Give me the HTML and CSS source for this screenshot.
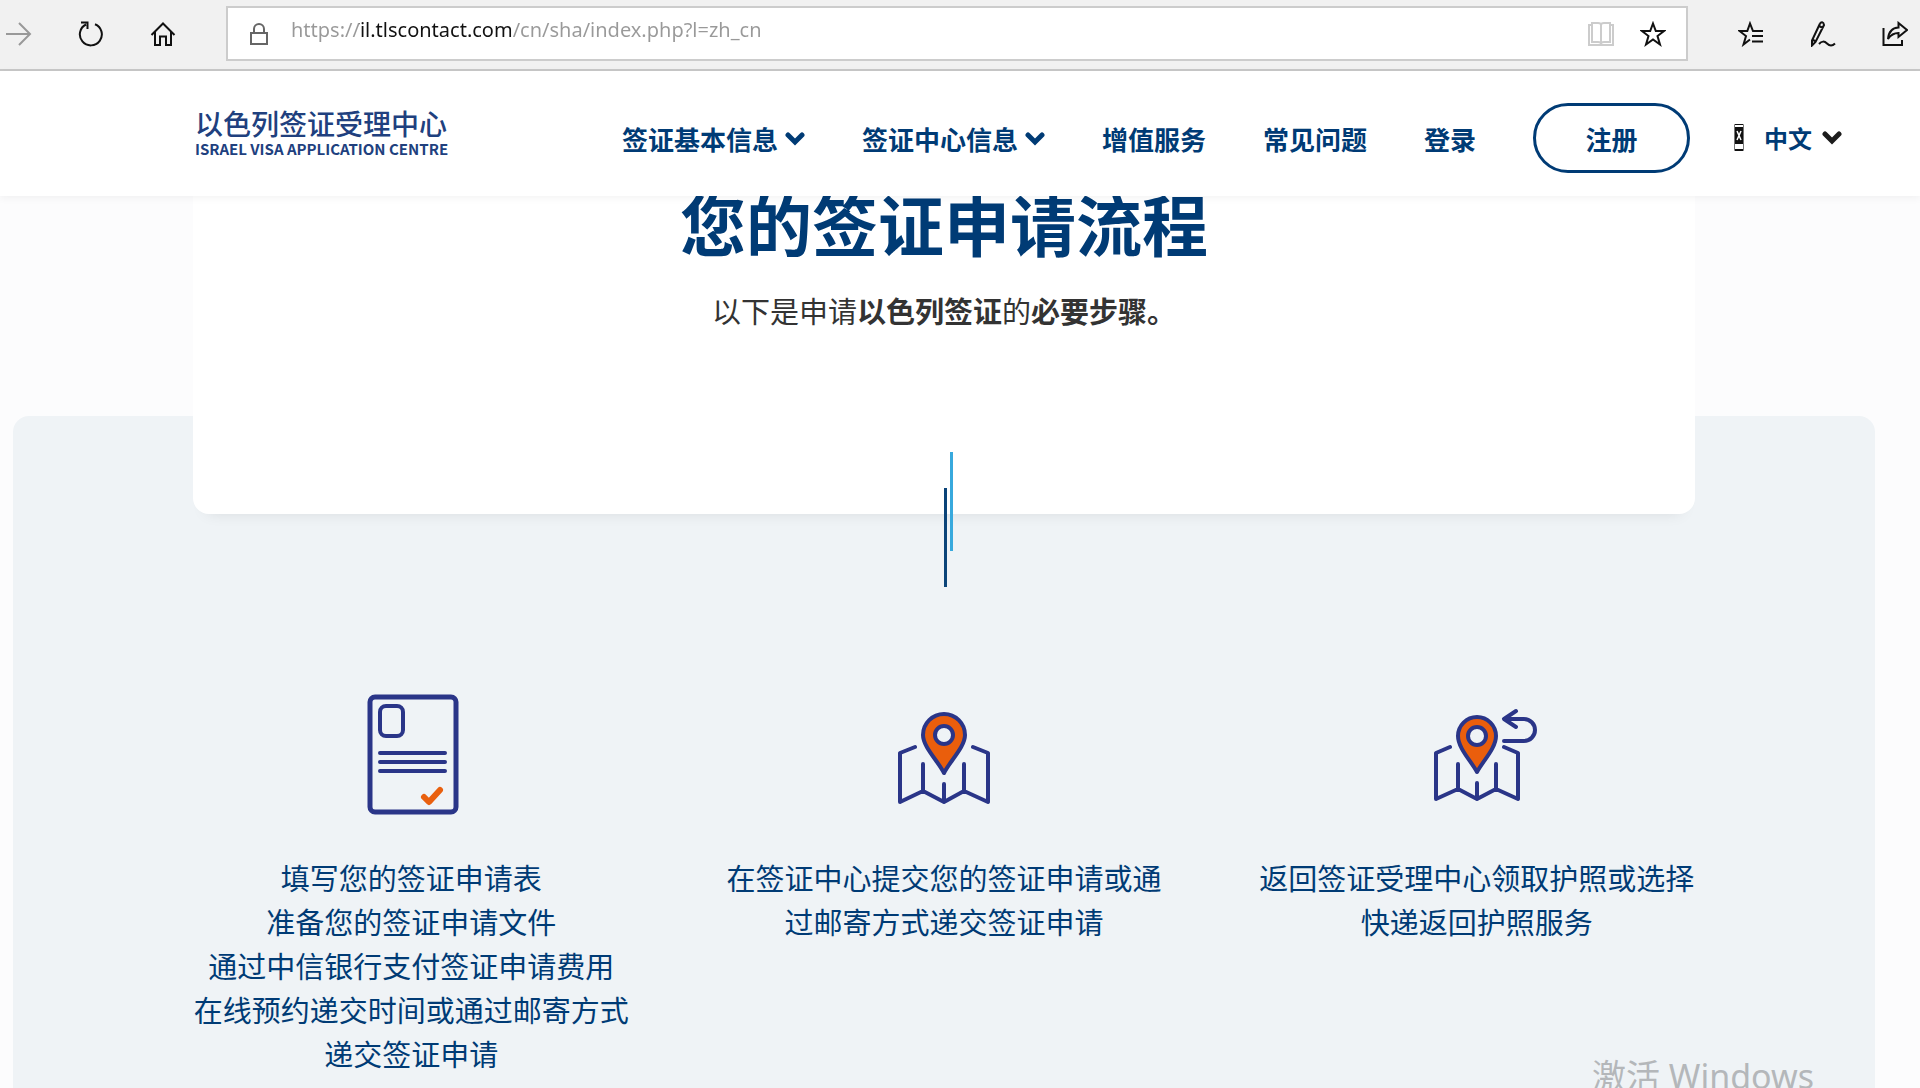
FILE: index.html
```html
<!DOCTYPE html>
<html lang="zh-CN">
<head>
<meta charset="utf-8">
<meta name="viewport" content="width=device-width, initial-scale=1">
<title>以色列签证受理中心</title>
<link rel="stylesheet" href="styles.css">
</head>
<body>
<div class="toolbar">
  <div class="tools tools-left">
    <button class="tool tool-dim" aria-label="前进"><svg viewBox="0 0 26 26"><path d="M0 13H24M13 2L24 13L13 24"/></svg></button>
    <button class="tool" aria-label="刷新"><svg viewBox="0 0 26 26"><path d="M17 3.200A11 11 0 1 1 8 3.500M3 1.500H9.500V8" stroke-width="2"/></svg></button>
    <button class="tool" aria-label="主页"><svg viewBox="0 0 26 26"><path d="M1.500 14L13 2.500L24.500 14M5 11V24H10V15.500H16V24H21V11" stroke-width="2"/></svg></button>
  </div>
  <div class="address">
    <svg class="lock" viewBox="0 0 18 22"><path d="M1 10H17V21H1ZM4 10V6A5 5 0 0 1 14 6V10"/></svg>
    <input class="url" type="text" aria-label="地址" value="https://il.tlscontact.com/cn/sha/index.php?l=zh_cn">
    <button class="tool tool-faint" aria-label="阅读视图"><svg viewBox="0 0 26 26"><path d="M4 2H10Q13 2 13 4Q13 2 16 2H22V21H16Q13 21 13 23Q13 21 10 21H4ZM13 4V23M4 4H1V24H25V4H22"/></svg></button>
    <button class="tool" aria-label="收藏"><svg viewBox="0 0 26 26"><path d="M13 2.500L15.800 10H24L17.500 15L20 23.500L13 18.500L6 23.500L8.500 15L2 10H10.200Z" stroke-width="2"/></svg></button>
  </div>
  <div class="tools tools-right">
    <button class="tool" aria-label="收藏夹"><svg viewBox="0 0 26 26"><path d="M25 10H15L12 2.500L9.300 10H1.500L8 15L5.500 23.500L12 18.500M14 15H25M14 20.500H25" stroke-width="2"/></svg></button>
    <button class="tool" aria-label="笔记"><svg viewBox="0 0 26 26"><path d="M10 2.500Q13 -.5 14 4L5.500 21L2 24.500V19.500L10 2.500M9 5L13 7M3 19L6 20.500M9 23Q13 18.500 17 22.500T25 22.500" stroke-width="2"/></svg></button>
    <button class="tool" aria-label="分享"><svg viewBox="0 0 26 26"><path d="M1.500 7V24H20V19M6 18Q7 7 16.500 6.500V2L25 9L16.500 16V12Q10 12 6 18Z" stroke-width="2"/></svg></button>
  </div>
</div>

<header class="header">
  <a class="logo" href="#"><span class="logo-cn">以色列签证受理中心</span><span class="logo-en">ISRAEL VISA APPLICATION CENTRE</span></a>
  <nav class="nav">
    <a href="#">签证基本信息<svg class="chevron" viewBox="0 0 20 14"><path d="M3 3L10 10L17 3"/></svg></a>
    <a href="#">签证中心信息<svg class="chevron" viewBox="0 0 20 14"><path d="M3 3L10 10L17 3"/></svg></a>
    <a href="#">增值服务</a>
    <a href="#">常见问题</a>
    <a href="#">登录</a>
    <button class="register">注册</button>
  </nav>
  <div class="language">
    <svg class="flag" viewBox="0 0 10 27"><path fill="#fff" stroke="#777" d="M.5.5H9.500V26.500H.5Z"/><path fill="#111" d="M1 3H9V20H1ZM1 25H9V27H1ZM1 0H9V1H1Z"/><path fill="none" stroke="#fff" stroke-width="1.500" d="M3 7L7 16M7 7L3 16"/></svg>
    <select class="language-select" aria-label="语言"><option>中文</option></select>
    <svg class="chevron chevron-dark" viewBox="0 0 20 14"><path d="M3 3L10 10L17 3"/></svg>
  </div>
</header>

<main class="main">
  <section class="intro">
    <h1>您的签证申请流程</h1>
    <p>以下是申请<strong>以色列签证</strong>的<strong>必要步骤。</strong></p>
    <span class="line line-light"></span>
    <span class="line line-dark"></span>
  </section>
  <section class="steps">
    <article class="step">
      <svg class="step-icon" viewBox="0 0 120 124"><g fill="none" stroke="#2a3588" stroke-linecap="round" stroke-linejoin="round"><rect x="19" y="4" width="86" height="115" rx="5" stroke-width="5"/><rect x="29" y="13" width="23" height="30" rx="6" stroke-width="4"/><path stroke-width="4" d="M29 60H94M29 69H94M29 78H94"/><path stroke="#e9600f" stroke-width="6" d="M73 104L78 109L89 97"/></g></svg>
      <p>填写您的签证申请表<br>准备您的签证申请文件<br>通过中信银行支付签证申请费用<br>在线预约递交时间或通过邮寄方式递交签证申请</p>
    </article>
    <article class="step">
      <svg class="step-icon" viewBox="0 0 120 124"><g fill="none" stroke="#2a3588" stroke-width="4" stroke-linecap="round" stroke-linejoin="round"><path d="M31 54L16 60V109L39 98L60 109L80 98L104 109V60L89 54M39 71V98M80 71V98M60 91V109"/><path fill="#ea5e0c" d="M60 80C54 68 39 54 39 42A21 21 0 0 1 81 42C81 54 66 68 60 80Z"/><circle cx="60" cy="42" r="9" fill="#eff3f6"/></g></svg>
      <p>在签证中心提交您的签证申请或通过邮寄方式递交签证申请</p>
    </article>
    <article class="step">
      <svg class="step-icon" viewBox="0 0 120 124"><g fill="none" stroke="#2a3588" stroke-width="4" stroke-linecap="round" stroke-linejoin="round"><path d="M33 54L19 60V106L41 96L60 106L79 96L101 106V60L87 54M41 71V96M79 71V96M60 90V106"/><path fill="#ea5e0c" d="M60 79C54 68 41 55 41 43A19 19 0 0 1 79 43C79 55 66 68 60 79Z"/><circle cx="60" cy="43" r="9" fill="#eff3f6"/><path d="M87 48H107A11 11 0 0 0 107 26H87M99 18L87 26L99 34"/></g></svg>
      <p>返回签证受理中心领取护照或选择快递返回护照服务</p>
    </article>
  </section>
</main>
<div class="watermark">激活 Windows</div>
</body>
</html>
```
FILE: styles.css
```css
* { box-sizing: border-box; }

body {
  margin: 0;
  min-height: 100vh;
  display: flex;
  flex-direction: column;
  position: relative;
  overflow-x: hidden;
  background: #fcfcfd;
  color: #333;
  font-family: "Noto Sans CJK SC", sans-serif;
}

a { color: inherit; text-decoration: none; }

button, input, select {
  margin: 0;
  padding: 0;
  border: 0;
  background: none;
  font: inherit;
  color: inherit;
}

/* Browser toolbar */
.toolbar {
  display: flex;
  align-items: center;
  padding: 6px 12px 8px 6px;
  border-bottom: 2px solid #c8c8c8;
  background: #f1f1f1;
}

.tools { display: flex; gap: 46px; }
.tools-left { margin-right: 50px; }
.tools-right { margin-left: 50px; }

.tool { width: 26px; height: 26px; color: #111; flex: none; }
.tool svg { display: block; width: 26px; height: 26px; }
.tool path, .lock path { fill: none; stroke: currentColor; stroke-width: 2; }
.tool-dim { color: #999; }
.tool-faint { color: #ccc; }

.address {
  flex: 1;
  display: flex;
  align-items: center;
  gap: 26px;
  height: 55px;
  padding: 0 20px 0 22px;
  border: 2px solid #ccc;
  background: #fff;
}

.lock { width: 18px; height: 22px; color: #666; }

.url {
  flex: 1;
  min-width: 0;
  height: 30px;
  margin: 0 0 8px -3px;
  font: 20px "Noto Sans", sans-serif;
  outline: 0;
  background: linear-gradient(90deg, #999 68px, #111 68px 220px, #999 220px);
  -webkit-background-clip: text;
  background-clip: text;
  -webkit-text-fill-color: transparent;
}

/* Site header */
.header {
  display: flex;
  align-items: center;
  position: relative;
  z-index: 2;
  min-height: 125px;
  padding: 0 78px 0 195px;
  background: #fff;
  box-shadow: 0 2px 8px rgba(0, 0, 0, 0.05);
  color: #003b75;
}

.logo { display: flex; flex-direction: column; color: #20407e; white-space: nowrap; }
.logo-cn { font-size: 28px; font-weight: 500; line-height: 30px; }
.logo-en { font-size: 15px; font-weight: 700; line-height: 22px; }

.nav {
  display: flex;
  align-items: center;
  gap: 57px;
  margin: 8px 44px 0 auto;
  font-size: 26px;
  font-weight: 700;
  white-space: nowrap;
}

.nav a { display: flex; align-items: center; gap: 7px; padding-top: 2px; }

.chevron { width: 20px; height: 14px; flex: none; }
.chevron path { fill: none; stroke: #003b75; stroke-width: 5; stroke-linecap: round; }
.chevron-dark path { stroke: #1c1c1c; }

.register {
  width: 157px;
  height: 70px;
  padding-top: 2px;
  border: 3px solid #003b75;
  border-radius: 35px;
}

.language { display: flex; align-items: center; gap: 10px; margin-top: 8px; }
.flag { width: 10px; height: 27px; margin-right: 10px; }
.language-select { appearance: none; width: 48px; font-size: 24px; font-weight: 700; }

/* Application steps */
.main {
  flex: 1;
  display: flex;
  flex-direction: column;
  padding: 0 45px 0 13px;
}

.intro {
  position: relative;
  z-index: 1;
  margin: 0 180px;
  padding-bottom: 182px;
  border-radius: 0 0 16px 16px;
  background: #fff;
  box-shadow: 0 12px 16px -14px rgba(0, 0, 0, 0.12);
  text-align: center;
}

.intro h1 { margin: -8px 0 32px; color: #003b75; font-size: 66px; line-height: 68px; }
.intro p { margin: 0; font-size: 29px; line-height: 44px; }

.line { position: absolute; left: 50%; width: 3px; height: 99px; }
.line-light { bottom: -37px; margin-left: 6px; background: #38a9dd; }
.line-dark { bottom: -73px; background: #0b4479; }

.steps {
  flex: 1;
  display: grid;
  grid-template-columns: repeat(3, 1fr);
  gap: 92px;
  margin-top: -98px;
  padding: 277px 178px 8px;
  border-radius: 16px 16px 0 0;
  background: #eff3f6;
  color: #003b75;
  text-align: center;
}

.step-icon { display: block; width: 120px; height: 124px; margin: 0 auto; }
.step p { margin: 38px 0 0; font-size: 29px; line-height: 44px; }

/* System notice over the page */
.watermark {
  position: absolute;
  right: 106px;
  bottom: 0;
  z-index: 3;
  height: 32px;
  overflow: hidden;
  color: #b4b7ba;
  font: 34px/40px "Noto Sans", "Noto Sans CJK SC", sans-serif;
}
```
